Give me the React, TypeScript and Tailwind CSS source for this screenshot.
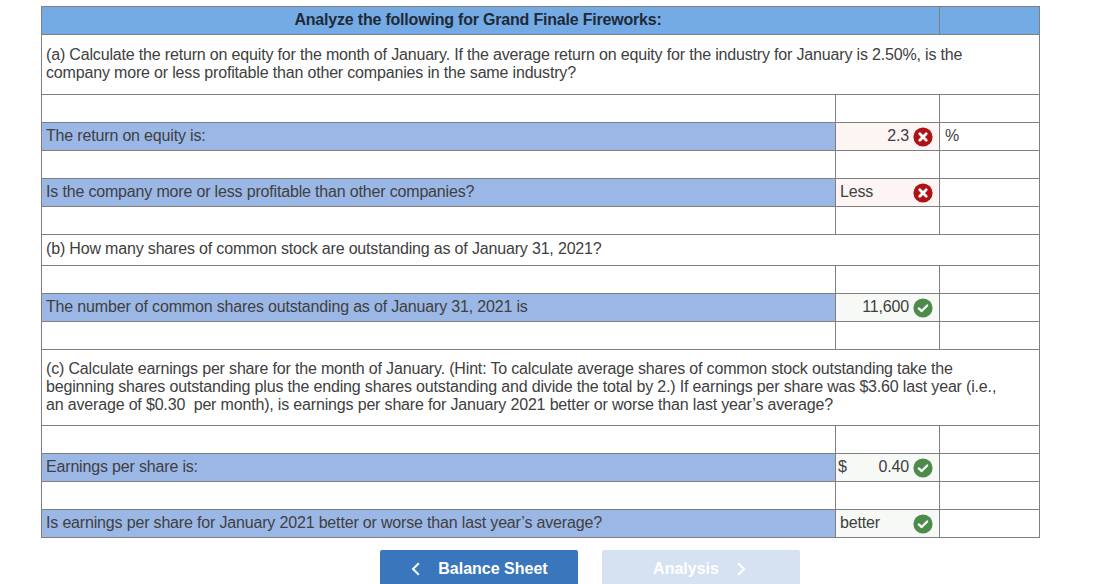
const RED = "#b01116";
const GREEN = "#4d8b4a";

function Mark({ ok }: { ok: boolean }) {
  return (
    <svg width="20" height="20" viewBox="0 0 20 20" className="shrink-0">
      <circle cx="10" cy="10" r="9.6" fill={ok ? GREEN : RED} />
      {ok ? (
        <path d="M5.8 10.4l2.9 2.7 5.5-5.6" fill="none" stroke="#fff" strokeWidth="2.2" strokeLinecap="round" strokeLinejoin="round" />
      ) : (
        <path d="M6.8 6.8l6.4 6.4M13.2 6.8l-6.4 6.4" fill="none" stroke="#fff" strokeWidth="2.8" strokeLinecap="round" />
      )}
    </svg>
  );
}

const td = "border border-[#7f7f7f] p-0 align-middle";

function Spacer() {
  return (
    <tr className="h-[28px]">
      <td className={td}></td>
      <td className={td}></td>
      <td className={td}></td>
    </tr>
  );
}

function Note({ h, children }: { h: string; children: React.ReactNode }) {
  return (
    <tr className={h}>
      <td colSpan={3} className={`${td} pl-[4px] pr-[28px] pb-[2px] leading-[18px]`}>
        {children}
      </td>
    </tr>
  );
}

function Answer({
  label,
  ok,
  value,
  left,
  prefix,
  unit,
}: {
  label: string;
  ok: boolean;
  value: string;
  left?: boolean;
  prefix?: string;
  unit?: string;
}) {
  return (
    <tr className="h-[28px]">
      <td className={`${td} bg-[#9bb7e6] pl-[4px] pb-[2px]`}>{label}</td>
      <td className={`${td} ${ok ? "bg-[#f6f9f5]" : "bg-[#fdf5f3]"}`}>
        <div className={`flex items-center pr-[6px] ${prefix ? "pl-[2px]" : "pl-[4px]"}`}>
          {prefix && <span className="pb-[2px]">{prefix}</span>}
          <span className={left ? "flex-1 pb-[2px]" : "flex-1 pb-[2px] pr-[4px] text-right"}>{value}</span>
          <Mark ok={ok} />
        </div>
      </td>
      <td className={`${td} pl-[5px] pb-[2px]`}>{unit}</td>
    </tr>
  );
}

export default function App() {
  return (
    <div className="h-[584px] overflow-hidden bg-white pl-[41px] pt-[6px] text-[16px] text-[#404040] font-['Liberation_Sans',Arial,sans-serif]">
      <table className="w-[999px] table-fixed border-collapse tracking-[-0.17px]">
        <colgroup>
          <col className="w-[794px]" />
          <col className="w-[104px]" />
          <col className="w-[100px]" />
        </colgroup>
        <tbody>
          <tr className="h-[28px] bg-[#74abe5]">
            <td colSpan={2} className={`${td} pr-[25px] pb-[2px] text-center font-bold tracking-[-0.2px] text-[#1f2a38]`}>
              Analyze the following for Grand Finale Fireworks:
            </td>
            <td className={td}></td>
          </tr>
          <Note h="h-[60px]">
            (a) Calculate the return on equity for the month of January. If the average return on equity for the industry for January is 2.50%, is the company more or less profitable than other companies in the same industry?
          </Note>
          <Spacer />
          <Answer label="The return on equity is:" ok={false} value="2.3" unit="%" />
          <Spacer />
          <Answer label="Is the company more or less profitable than other companies?" ok={false} value="Less" left />
          <Spacer />
          <Note h="h-[31px]">(b) How many shares of common stock are outstanding as of January 31, 2021?</Note>
          <Spacer />
          <Answer label="The number of common shares outstanding as of January 31, 2021 is" ok value="11,600" />
          <Spacer />
          <Note h="h-[76px]">
            (c) Calculate earnings per share for the month of January. (Hint: To calculate average shares of common stock outstanding take the beginning shares outstanding plus the ending shares outstanding and divide the total by 2.) If earnings per share was $3.60 last year (i.e., an average of $0.30&nbsp; per month), is earnings per share for January 2021 better or worse than last year’s average?
          </Note>
          <Spacer />
          <Answer label="Earnings per share is:" ok value="0.40" prefix="$" />
          <Spacer />
          <Answer label="Is earnings per share for January 2021 better or worse than last year’s average?" ok value="better" left />
        </tbody>
      </table>
      <div className="mt-[12px] flex gap-[24px] pl-[339px]">
        <button className="flex h-[38px] w-[198px] items-center justify-center gap-[18px] rounded-[2px] bg-[#3a76bb] font-bold text-white">
          <svg width="10" height="14" viewBox="0 0 10 14">
            <path d="M8.8 1.2L3 7l5.8 5.8" fill="none" stroke="#fff" strokeWidth="2" />
          </svg>
          Balance Sheet
        </button>
        <button className="flex h-[38px] w-[198px] items-center justify-center gap-[18px] rounded-[2px] bg-[#d6e2f1] pr-[2px] font-bold text-white">
          Analysis
          <svg width="10" height="14" viewBox="0 0 10 14">
            <path d="M1.2 1.2L7 7l-5.8 5.8" fill="none" stroke="#fff" strokeWidth="2" />
          </svg>
        </button>
      </div>
    </div>
  );
}
